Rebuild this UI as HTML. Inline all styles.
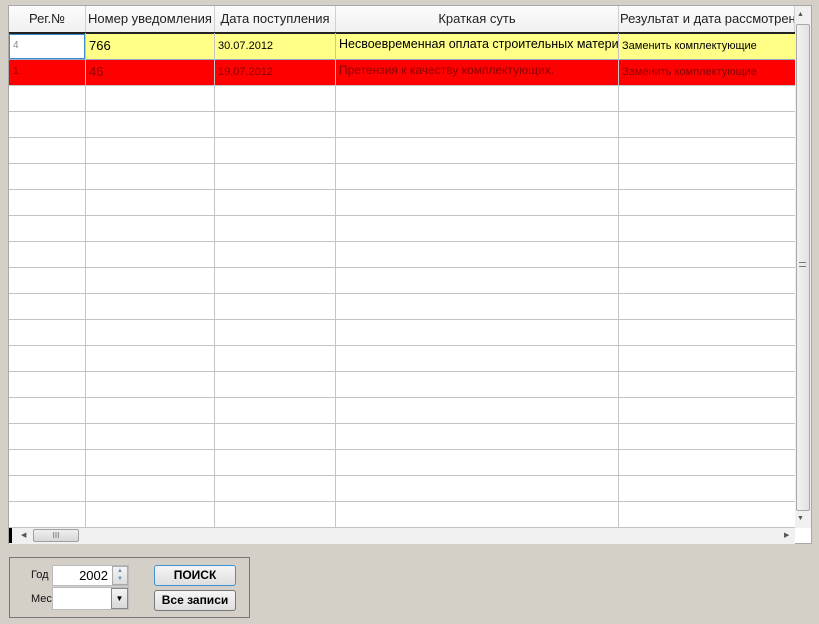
<!DOCTYPE html>
<html><head><meta charset="utf-8"><style>
body{margin:0;width:819px;height:624px;background:#d4d0c8;position:relative;overflow:hidden;font-family:"Liberation Sans","DejaVu Sans",sans-serif;}
.a{position:absolute;}
#grid{left:8px;top:5px;width:804px;height:539px;background:#fff;border:1px solid #a8a8a8;box-sizing:border-box;}
.hd{top:6px;height:27px;font-size:13px;color:#222;text-align:center;line-height:26px;background:linear-gradient(#fcfcfc,#f0f0f0);border-right:1px solid #d0d0d0;box-sizing:border-box;white-space:nowrap;overflow:hidden;}
.vl{width:1px;background:#c4c4c4;top:33px;height:494px;}
.hl{left:9px;width:786px;height:1px;background:#c4c4c4;}
.c{font-size:11px;white-space:nowrap;overflow:hidden;line-height:24px;padding-left:3px;box-sizing:border-box;}
.r{color:#8a0000}
</style></head><body>
<div id="grid" class="a"></div>
<div class="a hd" style="left:9px;width:77px">Рег.№</div>
<div class="a hd" style="left:86px;width:129px">Номер уведомления</div>
<div class="a hd" style="left:215px;width:121px">Дата поступления</div>
<div class="a hd" style="left:336px;width:283px">Краткая суть</div>
<div class="a hd" style="left:619px;width:176px;text-align:left;padding-left:1px">Результат и дата рассмотрения</div>
<div class="a" style="left:9px;top:32px;width:786px;height:2px;background:#222"></div>
<!-- row1 -->
<div class="a" style="left:9px;top:34px;width:786px;height:25px;background:#ffff88;border-bottom:1px solid #9ac"></div>
<div class="a" style="left:9px;top:34px;width:76px;height:25px;background:#fff;border:1px solid #3b8fd0;box-sizing:border-box"></div>
<div class="a c" style="left:10px;top:34px;width:75px;color:#888;font-size:10px">4</div>
<div class="a c" style="left:86px;top:34px;width:129px;font-size:13px">766</div>
<div class="a c" style="left:215px;top:34px;width:121px">30.07.2012</div>
<div class="a c" style="left:336px;top:32px;width:282px;font-size:12.5px">Несвоевременная оплата строительных материалов</div>
<div class="a c" style="left:619px;top:34px;width:176px">Заменить комплектующие</div>
<!-- row2 -->
<div class="a" style="left:9px;top:60px;width:786px;height:25px;background:#ff0000"></div>
<div class="a c r" style="left:10px;top:60px;width:75px;font-size:10px">1</div>
<div class="a c r" style="left:86px;top:60px;width:129px;font-size:13px">46</div>
<div class="a c r" style="left:215px;top:60px;width:121px">19.07.2012</div>
<div class="a c r" style="left:336px;top:58px;width:282px;font-size:12px">Претензия к качеству комплектующих.</div>
<div class="a c r" style="left:619px;top:60px;width:176px">Заменить комплектующие</div>
<!-- vertical lines -->
<div class="a vl" style="left:85px"></div>
<div class="a vl" style="left:214px"></div>
<div class="a vl" style="left:335px"></div>
<div class="a vl" style="left:618px"></div>
<!-- horizontal lines -->
<div class="a hl" style="top:85px"></div><div class="a hl" style="top:111px"></div><div class="a hl" style="top:137px"></div><div class="a hl" style="top:163px"></div><div class="a hl" style="top:189px"></div><div class="a hl" style="top:215px"></div><div class="a hl" style="top:241px"></div><div class="a hl" style="top:267px"></div><div class="a hl" style="top:293px"></div><div class="a hl" style="top:319px"></div><div class="a hl" style="top:345px"></div><div class="a hl" style="top:371px"></div><div class="a hl" style="top:397px"></div><div class="a hl" style="top:423px"></div><div class="a hl" style="top:449px"></div><div class="a hl" style="top:475px"></div><div class="a hl" style="top:501px"></div><div class="a hl" style="top:527px"></div>
<!-- vertical scrollbar -->
<div class="a" style="left:795px;top:6px;width:16px;height:522px;background:#f0f0f0"></div>
<div class="a" style="left:797px;top:11px;font-size:7px;color:#555">▲</div>
<div class="a" style="left:796px;top:24px;width:14px;height:487px;background:linear-gradient(90deg,#f2f2f2,#e2e2e2);border:1px solid #a8a8a8;border-radius:2px;box-sizing:border-box"></div>
<div class="a" style="left:799px;top:262px;width:7px;height:5px;border-top:1px solid #777;border-bottom:1px solid #777;box-sizing:border-box"></div>
<div class="a" style="left:797px;top:515px;font-size:7px;color:#555">▼</div>
<!-- horizontal scrollbar -->
<div class="a" style="left:9px;top:528px;width:786px;height:16px;background:#f0f0f0"></div>
<div class="a" style="left:9px;top:528px;width:3px;height:15px;background:#000"></div>
<div class="a" style="left:21px;top:531px;font-size:7px;color:#555">◀</div>
<div class="a" style="left:33px;top:529px;width:46px;height:13px;background:linear-gradient(#eee,#d8d8d8);border:1px solid #a0a0a0;border-radius:2px;box-sizing:border-box;font-size:8px;text-align:center;line-height:11px;color:#666">III</div>
<div class="a" style="left:784px;top:531px;font-size:7px;color:#555">▶</div>
<!-- panel -->
<div class="a" style="left:9px;top:557px;width:241px;height:61px;border:1px solid #777;box-sizing:border-box"></div>
<div class="a" style="left:31px;top:569px;font-size:11px;color:#111">Год</div>
<div class="a" style="left:52px;top:565px;width:77px;height:21px;background:#fff;border:1px solid #bbb;box-sizing:border-box"></div>
<div class="a" style="left:54px;top:568px;width:54px;text-align:right;font-size:13px">2002</div>
<div class="a" style="left:112px;top:566px;width:16px;height:19px;background:linear-gradient(#f4f4f4,#dcdcdc);border:1px solid #aaa;box-sizing:border-box;font-size:6px;color:#6a8ab0;text-align:center;line-height:8px">▲<br>▼</div>
<div class="a" style="left:31px;top:593px;font-size:11px;color:#111">Мес</div>
<div class="a" style="left:52px;top:587px;width:77px;height:23px;background:#fff;border:1px solid #bbb;box-sizing:border-box"></div>
<div class="a" style="left:111px;top:588px;width:17px;height:21px;background:linear-gradient(#f4f4f4,#d8d8d8);border:1px solid #888;box-sizing:border-box;font-size:8px;text-align:center;line-height:19px">▼</div>
<div class="a" style="left:154px;top:565px;width:82px;height:21px;background:linear-gradient(#f6f6f6,#dedede);border:1px solid #3c93d6;border-radius:3px;box-sizing:border-box;font-size:12px;font-weight:bold;text-align:center;line-height:19px">ПОИСК</div>
<div class="a" style="left:154px;top:590px;width:82px;height:21px;background:linear-gradient(#f6f6f6,#dedede);border:1px solid #777;border-radius:3px;box-sizing:border-box;font-size:12px;font-weight:bold;text-align:center;line-height:19px">Все записи</div>
</body></html>
